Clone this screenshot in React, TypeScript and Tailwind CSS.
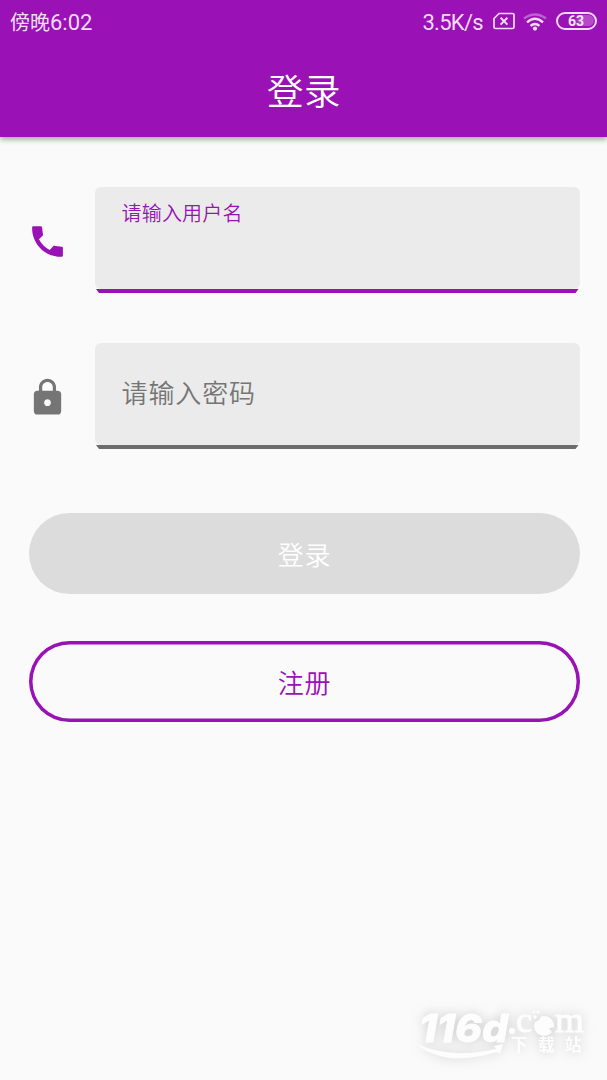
import React, { useState } from 'react';
import { MdLock } from 'react-icons/md';

function StatusBar() {
  return (
    <div className="flex h-[44px] items-center justify-between pl-[10px] pr-[10px] text-[#f3dcf6]">
      <span className="text-[20px] leading-[44px]">
        傍晚<span className="font-[Roboto] text-[22px]">6:02</span>
      </span>
      <div className="flex items-center">
        <span className="mr-[10px] pt-[1px] font-[Roboto] text-[22px] leading-[44px] tracking-[-0.7px]">3.5K/s</span>
        <svg width="22" height="18" viewBox="0 0 22 18" fill="none" stroke="currentColor" strokeWidth="1.7" className="-mt-[2px] mr-[8px]">
          <path d="M6 1.5H19.5Q21 1.5 21 3V15Q21 16.5 19.5 16.5H2.5Q1 16.5 1 15V6.5Z" />
          <path d="M7.6 5.8L14.4 12.6M14.4 5.8L7.6 12.6" strokeWidth="2" />
        </svg>
        <svg width="24" height="18" viewBox="0 0 24 18" fill="none" stroke="currentColor" strokeWidth="2.4" className="mr-[9px]">
          <path d="M1 5.5Q12 -2.5 23 5.5" opacity=".4" />
          <path d="M4 9.3Q12 2.3 20 9.3" />
          <path d="M7.5 12.8Q12 9 16.5 12.8" />
          <circle cx="12" cy="15.6" r="2.1" fill="currentColor" stroke="none" />
        </svg>
        <div className="-mt-[3px] flex h-[18px] w-[41px] rounded-full border-2 border-current p-[1.5px]">
          <div className="flex w-[34px] items-center justify-center rounded-full bg-linear-to-r from-[#9a11b5] from-40% to-[#b54bc8] to-60% pr-[1px] font-[Roboto] text-[14px] font-bold leading-none text-[#f8e8fa]">
            63
          </div>
        </div>
      </div>
    </div>
  );
}

function PhoneIcon() {
  return (
    <svg width="41" height="41" viewBox="0 0 24 24" fill="currentColor">
      <path d="M20.4 15.1L15.6 14.5L13.3 17C10.6 15.6 8.4 13.4 7 10.7L9.4 8.3L8.8 3.6Q8.7 3 8.1 3H3.7Q3.03 3 3.02 3.7C2.75 13.3 10.7 21.25 20.3 20.98Q21 20.97 21 20.3V15.8Q21 15.16 20.4 15.1Z" />
    </svg>
  );
}

interface FieldProps {
  label: string;
  active: boolean;
  icon: React.ReactNode;
  onFocus: () => void;
}

function Field({ label, active, icon, onFocus }: FieldProps) {
  return (
    <div
      className={`flex h-[106px] items-center ${active ? 'text-[#9a11b5]' : 'text-[#757575]'}`}
      onClick={onFocus}
    >
      <div className="w-[67.5px] pt-[2px]">{icon}</div>
      <div className="flex h-full flex-1 flex-col">
        <div className="flex h-[102px] rounded-[6px] bg-[#ebebeb] pl-[27px]">
          <span
            className={
              active
                ? 'mt-[11px] text-[20px] font-[350] leading-[30px] tracking-[0.2px]'
                : 'mt-[29px] text-[26px] font-[350] leading-[40px] tracking-[0.9px]'
            }
          >
            {label}
          </span>
        </div>
        <div
          className={`mx-[1.5px] h-[4px] [clip-path:polygon(0_0,100%_0,calc(100%-3px)_100%,3px_100%)] ${
            active ? 'bg-[#9a11b5]' : 'bg-[#6c6c6c]'
          }`}
        />
      </div>
    </div>
  );
}

function Watermark() {
  return (
    <svg
      width="187"
      height="80"
      viewBox="0 0 187 80"
      className="absolute bottom-0 right-[10px] overflow-visible [filter:drop-shadow(0_0_6px_rgba(0,0,0,0.18))]"
      fill="#fdfdfd"
    >
      <text
        x="9"
        y="42"
        fontFamily="Inter"
        fontSize="38"
        fontWeight="800"
        fontStyle="italic"
        textLength="89"
        lengthAdjust="spacingAndGlyphs"
        stroke="#fdfdfd"
        strokeWidth=".8"
      >
        116d
      </text>
      <path d="M8 45Q45 59 86 49L84 46L93 44L90 54L87 52Q48 63 27 55Q16 52 8 45Z" />
      <circle cx="102" cy="31" r="3" />
      <text x="106" y="32" fontFamily="Liberation Serif" fontSize="35" textLength="16" lengthAdjust="spacingAndGlyphs" stroke="#fdfdfd" strokeWidth=".8">
        c
      </text>
      <path d="M131 16.5A10 10 0 0 1 144 27L139 28.5L142 32A10 10 0 0 1 124.7 22.5L129 20Z" />
      <circle cx="125" cy="17" r="1.8" />
      <circle cx="124" cy="12" r="1.2" />
      <circle cx="128" cy="12" r="1.5" />
      <text x="145" y="32" fontFamily="Liberation Serif" fontSize="35" textLength="29" lengthAdjust="spacingAndGlyphs" stroke="#fdfdfd" strokeWidth=".8">
        m
      </text>
      <text x="101" y="50.5" fontFamily="Noto Sans CJK SC" fontSize="16.5" fontWeight="700" letterSpacing="10.5">
        下载站
      </text>
    </svg>
  );
}

export default function App() {
  const [focused, setFocused] = useState('user');

  return (
    <div className="relative h-[1080px] w-[607px] overflow-hidden bg-[#fafafa] font-['Noto_Sans_CJK_SC',sans-serif]">
      <header className="h-[137px] bg-[#9a11b5] shadow-[0_2px_6px_rgba(0,0,0,0.4)]">
        <StatusBar />
        <h1 className="pl-[1px] text-center text-[36.5px] font-[350] leading-[92px] tracking-[0.5px] text-white">登录</h1>
      </header>

      <main className="pl-[27px] pr-[27px] pt-[50px]">
        <Field
          label="请输入用户名"
          active={focused === 'user'}
          icon={<PhoneIcon />}
          onFocus={() => setFocused('user')}
        />
        <div className="h-[50px]" />
        <Field
          label="请输入密码"
          active={focused === 'password'}
          icon={<MdLock size={41} />}
          onFocus={() => setFocused('password')}
        />

        <div className="ml-[2px] mt-[64px] flex flex-col gap-[47px]">
          <button className="h-[81px] rounded-full bg-[#dcdcdc] pb-[1px] text-[26px] font-[350] tracking-[0.8px] text-white">
            登录
          </button>
          <button className="h-[81px] rounded-full pb-[1px] text-[26px] font-[350] tracking-[0.8px] text-[#9a11b5] shadow-[inset_0_0_0_3.5px_#9a11b5]">
            注册
          </button>
        </div>
      </main>

      {/* site logo in the corner */}
      <Watermark />
    </div>
  );
}
